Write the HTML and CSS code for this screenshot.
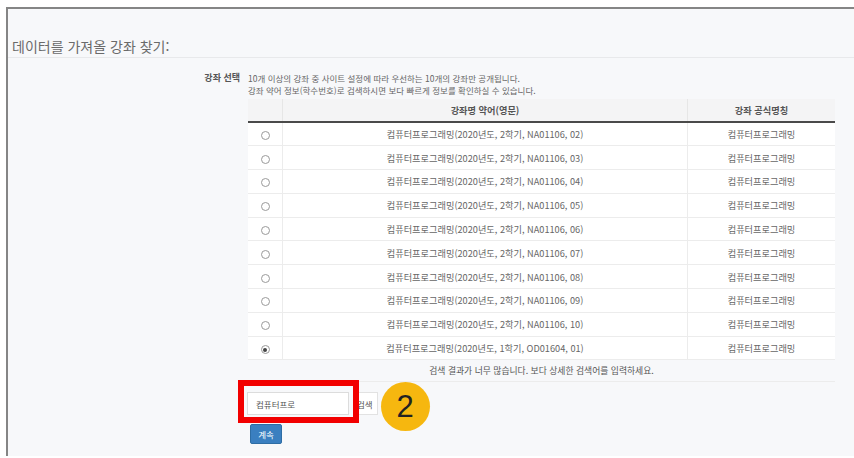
FILE: index.html
```html
<!DOCTYPE html>
<html lang="ko">
<head>
<meta charset="utf-8">
<title>강좌 찾기</title>
<link rel="stylesheet" href="styles.css">
</head>
<body>
<div class="frame">
  <h2 class="title">데이터를 가져올 강좌 찾기:</h2>
  <div class="form-row">
    <div class="label">강좌 선택</div>
    <div class="field">
      <p class="help">10개 이상의 강좌 중 사이트 설정에 따라 우선하는 10개의 강좌만 공개됩니다.<br>강좌 약어 정보(학수번호)로 검색하시면 보다 빠르게 정보를 확인하실 수 있습니다.</p>
      <table class="courses">
        <thead>
          <tr><th class="c-radio"></th><th class="c-short">강좌명 약어(영문)</th><th class="c-full">강좌 공식명칭</th></tr>
        </thead>
        <tbody>
          <tr><td class="c-radio"><span class="radio"></span></td><td>컴퓨터프로그래밍(2020년도, 2학기, NA01106, 02)</td><td>컴퓨터프로그래밍</td></tr>
          <tr><td class="c-radio"><span class="radio"></span></td><td>컴퓨터프로그래밍(2020년도, 2학기, NA01106, 03)</td><td>컴퓨터프로그래밍</td></tr>
          <tr><td class="c-radio"><span class="radio"></span></td><td>컴퓨터프로그래밍(2020년도, 2학기, NA01106, 04)</td><td>컴퓨터프로그래밍</td></tr>
          <tr><td class="c-radio"><span class="radio"></span></td><td>컴퓨터프로그래밍(2020년도, 2학기, NA01106, 05)</td><td>컴퓨터프로그래밍</td></tr>
          <tr><td class="c-radio"><span class="radio"></span></td><td>컴퓨터프로그래밍(2020년도, 2학기, NA01106, 06)</td><td>컴퓨터프로그래밍</td></tr>
          <tr><td class="c-radio"><span class="radio"></span></td><td>컴퓨터프로그래밍(2020년도, 2학기, NA01106, 07)</td><td>컴퓨터프로그래밍</td></tr>
          <tr><td class="c-radio"><span class="radio"></span></td><td>컴퓨터프로그래밍(2020년도, 2학기, NA01106, 08)</td><td>컴퓨터프로그래밍</td></tr>
          <tr><td class="c-radio"><span class="radio"></span></td><td>컴퓨터프로그래밍(2020년도, 2학기, NA01106, 09)</td><td>컴퓨터프로그래밍</td></tr>
          <tr><td class="c-radio"><span class="radio"></span></td><td>컴퓨터프로그래밍(2020년도, 2학기, NA01106, 10)</td><td>컴퓨터프로그래밍</td></tr>
          <tr><td class="c-radio"><span class="radio checked"></span></td><td>컴퓨터프로그래밍(2020년도, 1학기, OD01604, 01)</td><td>컴퓨터프로그래밍</td></tr>
          <tr class="notice"><td colspan="3">검색 결과가 너무 많습니다. 보다 상세한 검색어를 입력하세요.</td></tr>
        </tbody>
      </table>
      <div class="search">
        <div class="search-box">
          <input class="search-input" type="text" value="컴퓨터프로">
          <span class="highlight"></span>
        </div>
        <button class="search-btn" type="button">검색</button>
        <span class="step">2</span>
      </div>
      <button class="continue" type="button">계속</button>
    </div>
  </div>
</div>
</body>
</html>
```

FILE: styles.css
```css
html, body {
  margin: 0;
  padding: 0;
  background: #ffffff;
  font-family: "Noto Sans CJK KR", "Noto Sans", sans-serif;
  color: #555;
}

.frame {
  margin: 7px 0 0 6px;
  height: 449px;
  box-sizing: border-box;
  border-top: 2px solid #858585;
  border-left: 2px solid #858585;
  background: #f7f8fa;
  overflow: hidden;
}

.title {
  margin: 0;
  padding: 28px 0 2px 4px;
  font-size: 14px;
  font-weight: 400;
  line-height: 18px;
  color: #6a6a6a;
  border-bottom: 1px solid #e8e9eb;
}

.form-row {
  display: flex;
  padding-top: 14px;
}

.label {
  width: 232px;
  flex: none;
  text-align: right;
  font-size: 9px;
  font-weight: 700;
  line-height: 12px;
  color: #555;
  padding-right: 8px;
}

.field {
  width: 587px;
}

.help {
  margin: 0 0 3px;
  font-size: 8.5px;
  line-height: 12px;
  color: #666;
}

.courses {
  width: 587px;
  border-collapse: collapse;
  font-size: 9.2px;
  line-height: 12px;
  color: #666;
  background: #ffffff;
}

.courses th {
  height: 22px;
  padding: 0;
  font-weight: 700;
  color: #555;
  background: #f4f4f5;
  border-left: 1px solid #e6e6e6;
  border-bottom: 2px solid #4a4a4a;
}

.courses th:first-child,
.courses td:first-child {
  border-left: none;
}

.courses tbody tr {
  height: 23.8px;
}

.courses td {
  padding: 0;
  text-align: center;
  border-left: 1px solid #ececec;
  border-bottom: 1px solid #ececec;
}

.c-radio { width: 34px; }
.c-full { width: 147px; }

.radio {
  display: inline-block;
  width: 7px;
  height: 7px;
  border: 1px solid #9a9a9a;
  border-radius: 50%;
  background: #fff;
  vertical-align: middle;
  position: relative;
}

.radio.checked::after {
  content: "";
  position: absolute;
  left: 1.5px;
  top: 1.5px;
  width: 4px;
  height: 4px;
  border-radius: 50%;
  background: #444;
}

.courses tbody tr.notice {
  height: 22px;
}

.courses .notice td {
  font-size: 8.8px;
  background: #f7f8fa;
  border-bottom: 1px solid #ececec;
  color: #555;
}

.search {
  display: flex;
  align-items: center;
  margin-top: 10px;
  height: 23px;
}

.search-box {
  position: relative;
}

.search-input {
  display: block;
  box-sizing: border-box;
  width: 102px;
  height: 23px;
  margin: 0 0 0 -1px;
  padding: 0 8px;
  font-family: inherit;
  font-size: 8.5px;
  color: #555;
  background: #fff;
  border: 1px solid #dcdcdc;
  outline: none;
}

.highlight {
  position: absolute;
  left: -10px;
  top: -12px;
  width: 121px;
  height: 43px;
  box-sizing: border-box;
  border: 6px solid #f20000;
}

.search-btn {
  height: 23px;
  margin: 0 0 0 5px;
  padding: 0 4px 0 3px;
  font-family: inherit;
  font-size: 8.5px;
  color: #555;
  background: #fff;
  border: 1px solid #e2e2e2;
  border-left: none;
}

.step {
  width: 49px;
  height: 49px;
  margin-left: 3px;
  margin-top: 5px;
  border-radius: 50%;
  background: #f6b70f;
  color: #222;
  font-family: "Liberation Sans", sans-serif;
  font-size: 31px;
  line-height: 49px;
  text-align: center;
  position: relative;
}

.continue {
  display: block;
  margin: 9px 0 0 2px;
  width: 32px;
  height: 20px;
  padding: 0;
  font-family: inherit;
  font-size: 8.5px;
  color: #fff;
  background: #3a7fc0;
  border: 1px solid #2e6da4;
  border-radius: 2px;
}
```
